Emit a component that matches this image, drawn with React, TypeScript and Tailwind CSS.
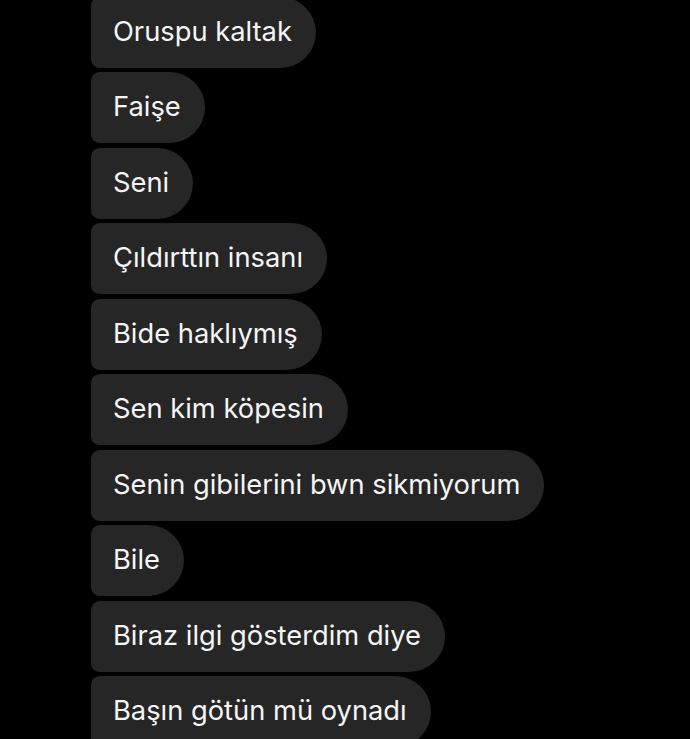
const messages = [
  "Oruspu kaltak",
  "Faişe",
  "Seni",
  "Çıldırttın insanı",
  "Bide haklıymış",
  "Sen kim köpesin",
  "Senin gibilerini bwn sikmiyorum",
  "Bile",
  "Biraz ilgi gösterdim diye",
  "Başın götün mü oynadı",
];

export default function App() {
  return (
    <div className="w-[690px] h-[739px] overflow-hidden bg-black">
      <ul className="flex flex-col items-start gap-[4.5px] pl-[91px] mt-[-3.5px]">
        {messages.map((text, i) => (
          <li
            key={i}
            className="flex items-center h-[71px] shrink-0 pl-[22px] pr-[24px] bg-[#262626] rounded-l-[9px] rounded-r-[36px] text-[27.3px] text-[#f5f5f5] whitespace-nowrap"
            style={{ fontFamily: "Inter, 'Noto Sans', sans-serif" }}
          >
            {text}
          </li>
        ))}
      </ul>
    </div>
  );
}
